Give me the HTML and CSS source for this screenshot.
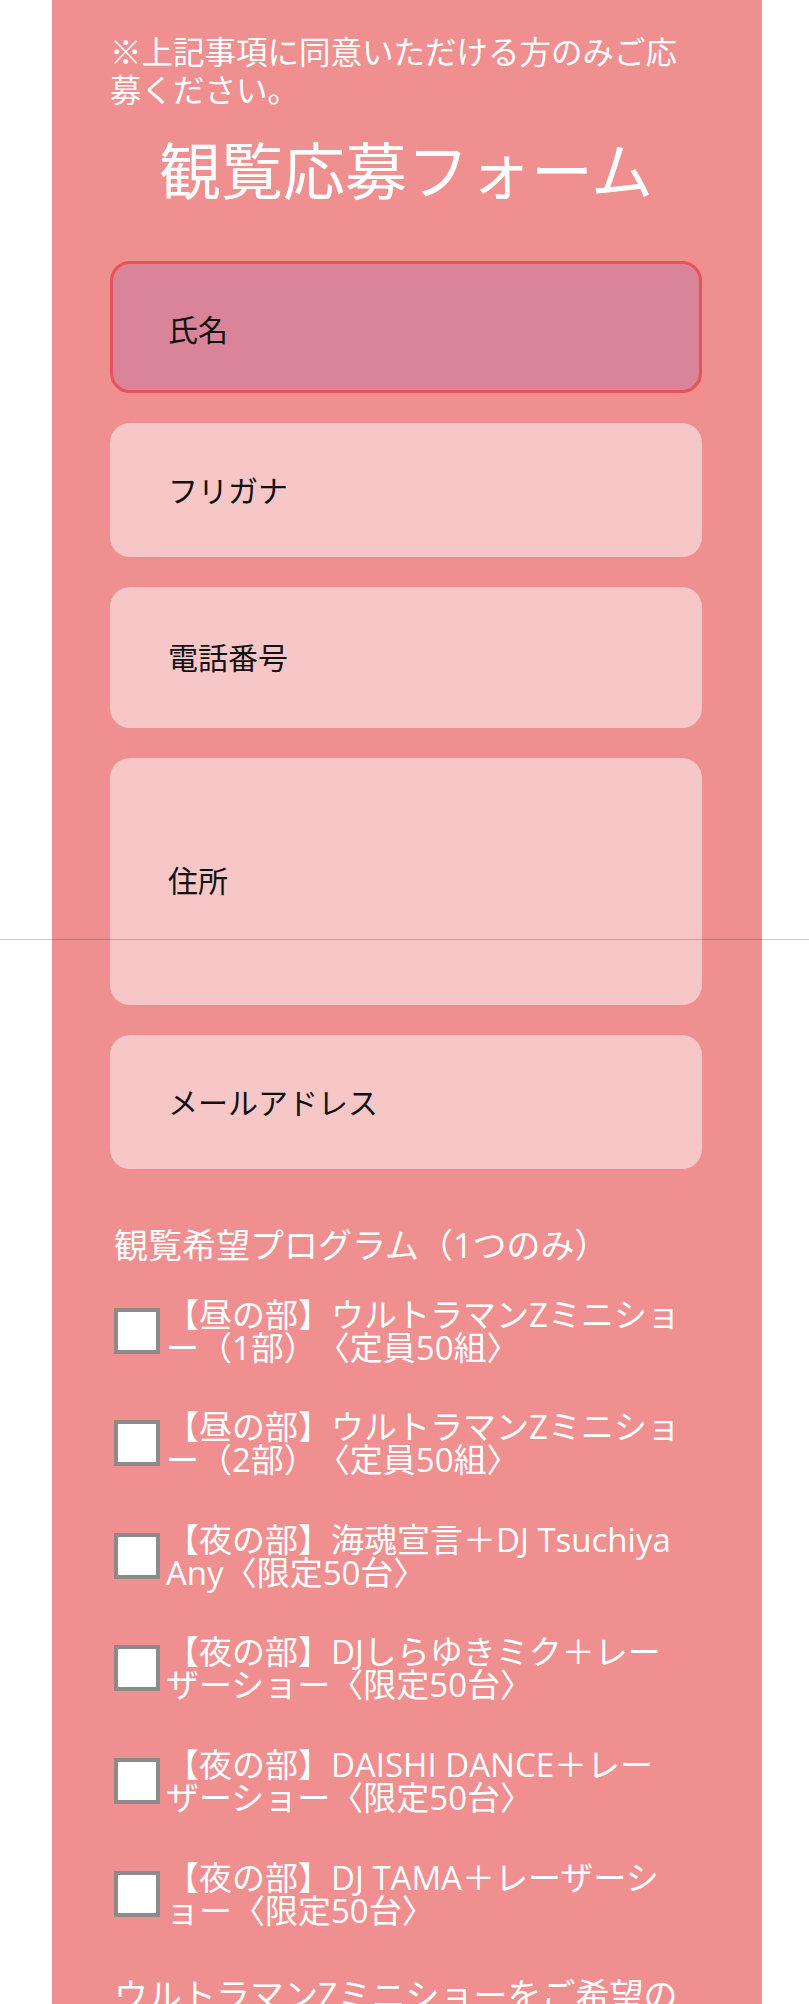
FILE: index.html
```html
<!DOCTYPE html>
<html lang="ja">
<head>
<meta charset="utf-8">
<title>観覧応募フォーム</title>
<link rel="stylesheet" href="styles.css">
</head>
<body>
<div class="page">
  <main class="panel">
    <p class="note">※上記事項に同意いただける方のみご応募ください。</p>
    <h1 class="title">観覧応募フォーム</h1>
    <form class="form">
      <div class="fields">
        <input class="field field--focus" type="text" placeholder="氏名">
        <input class="field" type="text" placeholder="フリガナ">
        <input class="field field--tall" type="tel" placeholder="電話番号">
        <textarea class="field field--area" placeholder="住所"></textarea>
        <input class="field" type="email" placeholder="メールアドレス">
      </div>
      <div class="programs">
        <p class="programs-title">観覧希望プログラム（1つのみ）</p>
        <div class="options">
          <label class="option"><input class="checkbox" type="checkbox"><span class="option-text">【昼の部】ウルトラマンZミニショー（1部）〈定員50組〉</span></label>
          <label class="option"><input class="checkbox" type="checkbox"><span class="option-text">【昼の部】ウルトラマンZミニショー（2部）〈定員50組〉</span></label>
          <label class="option"><input class="checkbox" type="checkbox"><span class="option-text">【夜の部】海魂宣言＋DJ Tsuchiya Any〈限定50台〉</span></label>
          <label class="option"><input class="checkbox" type="checkbox"><span class="option-text">【夜の部】DJしらゆきミク＋レーザーショー〈限定50台〉</span></label>
          <label class="option"><input class="checkbox" type="checkbox"><span class="option-text">【夜の部】DAISHI DANCE＋レーザーショー〈限定50台〉</span></label>
          <label class="option"><input class="checkbox" type="checkbox"><span class="option-text">【夜の部】DJ TAMA＋レーザーショー〈限定50台〉</span></label>
        </div>
        <p class="remark">ウルトラマンZミニショーをご希望の</p>
      </div>
    </form>
  </main>
  <div class="scan-line"></div>
</div>
</body>
</html>
```
FILE: styles.css
```css
html, body {
  margin: 0;
  padding: 0;
  background: #ffffff;
}

body {
  font-family: "Open Sans", "Noto Sans CJK JP", sans-serif;
  text-spacing-trim: space-all;
}

.page {
  position: relative;
}

.panel {
  box-sizing: border-box;
  margin-left: 52px;
  width: 710px;
  padding: 33px 60px 80px 58px;
  background: #ef8f90;
  color: #ffffff;
}

.note {
  margin: 0;
  font-size: 31.5px;
  line-height: 38px;
}

.title {
  margin: 25px 0 53px;
  font-size: 62px;
  line-height: 74px;
  font-weight: 400;
  text-align: center;
}

.form {
  display: flex;
  flex-direction: column;
}

.fields {
  display: flex;
  flex-direction: column;
  gap: 30px;
}

.field {
  display: block;
  box-sizing: border-box;
  width: 100%;
  height: 134px;
  margin: 0;
  padding: 0 55px;
  border: 3px solid transparent;
  border-radius: 20px;
  background: #f7c6c7;
  font-family: inherit;
  font-size: 30px;
  color: #111111;
  outline: none;
}

.field::placeholder {
  color: #111111;
  opacity: 1;
}

.field--focus {
  height: 132px;
  padding-top: 4px;
  background: #d98499;
  border-color: #e8525a;
}

.field--tall {
  height: 141px;
}

.field--area {
  height: 247px;
  padding-top: 102px;
  line-height: 36px;
  resize: none;
}

.programs {
  margin-top: 56px;
  padding-left: 4px;
}

.programs-title {
  margin: 0;
  font-size: 34px;
  line-height: 40px;
}

.options {
  display: flex;
  flex-direction: column;
  gap: 46.6px;
  margin-top: 32.6px;
}

.option {
  display: flex;
  align-items: center;
  gap: 6px;
  padding-right: 19px;
  font-size: 33px;
  line-height: 33px;
  line-break: loose;
}

.checkbox {
  -webkit-appearance: none;
  appearance: none;
  flex: none;
  box-sizing: border-box;
  width: 46px;
  height: 46px;
  margin: 0;
  border: 4px solid #8e8a8b;
  border-radius: 0;
  background: #ffffff;
}

.option-text {
  flex: 1 1 auto;
  min-width: 0;
}

.remark {
  margin: 48.8px 0 0;
  font-size: 34px;
  line-height: 40px;
}

.scan-line {
  position: absolute;
  top: 939px;
  left: 0;
  width: 100%;
  height: 1px;
  background: rgba(0, 0, 0, 0.2);
}
```
